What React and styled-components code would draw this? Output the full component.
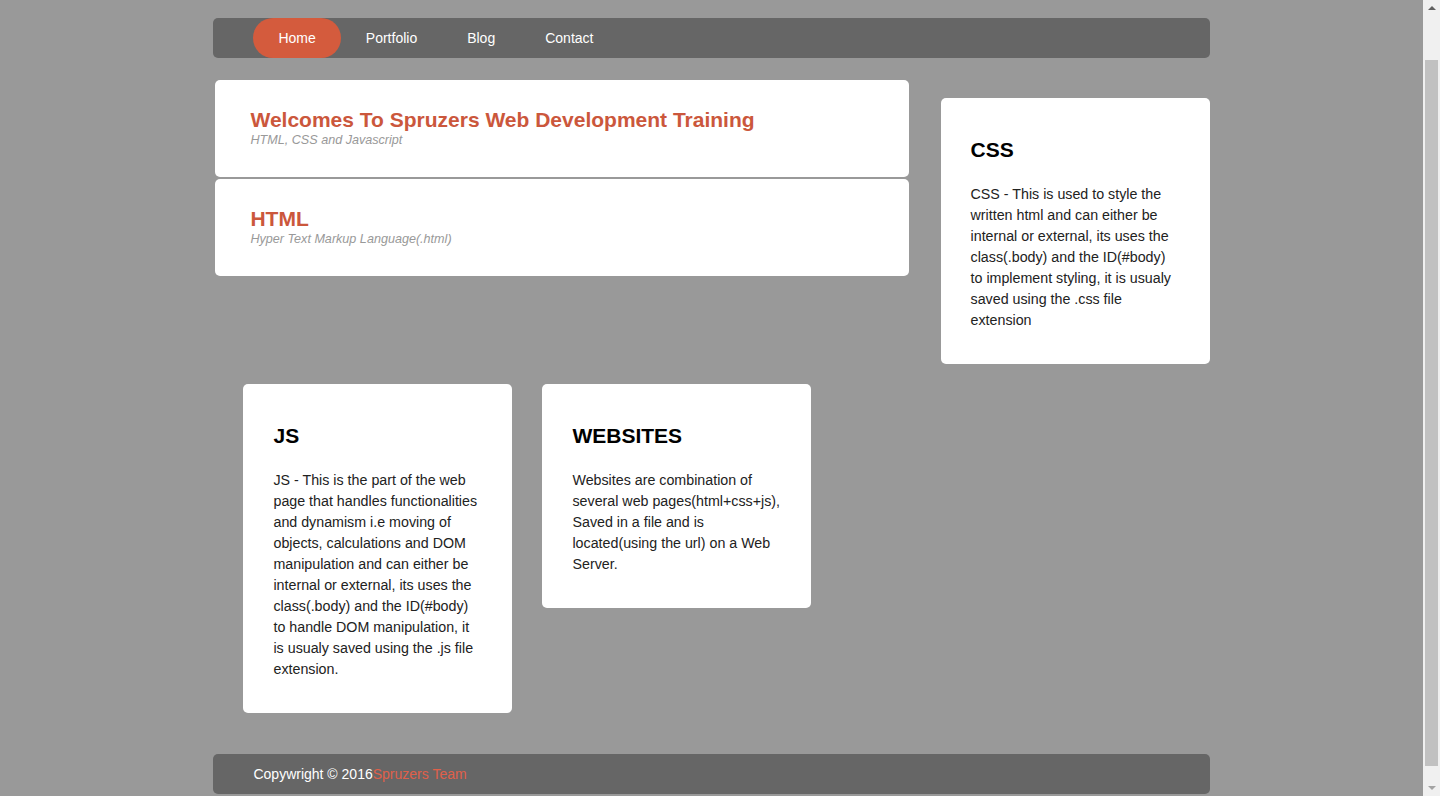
import React from "react";
import styled, { createGlobalStyle } from "styled-components";

const accent = "#d45b3d";

const GlobalStyle = createGlobalStyle`
  body {
    margin: 0;
    padding-right: 17px;
    background-color: #999999;
    font-family: "Liberation Sans", Arial, sans-serif;
  }
`;

// stand-in for the browser's vertical scrollbar seen in the screenshot
const ScrollTrack = styled.div`
  position: fixed;
  top: 0;
  right: 0;
  width: 17px;
  height: 100vh;
  background-color: #f0f0f0;
  display: flex;
  flex-direction: column;
  align-items: center;
`;

const ScrollArrow = styled.div`
  width: 0;
  height: 0;
  border-left: 4px solid transparent;
  border-right: 4px solid transparent;
  ${({ down }) =>
    down
      ? "border-top: 4px solid #a3a3a3; margin-top: auto; margin-bottom: 6px;"
      : "border-bottom: 4px solid #606060; margin-top: 6px;"}
`;

const ScrollThumb = styled.div`
  width: 13px;
  height: 706px;
  margin-top: 50px;
  background-color: #c1c1c1;
`;

const Wrapper = styled.div`
  width: 70%;
  margin: 0 auto;
  padding: 18px 0 18px;
`;

const NavBar = styled.nav`
  height: 40px;
  background-color: #666666;
  border-radius: 5px;
  display: flex;
  align-items: stretch;
  padding-left: 40px;
`;

const NavItem = styled.a`
  display: flex;
  align-items: center;
  padding: 0 25px;
  font-size: 14px;
  color: #ffffff;
  text-decoration: none;
  border-radius: 20px;
  background-color: ${({ active }) => (active ? accent : "transparent")};
`;

const TopRow = styled.div`
  display: flex;
  align-items: flex-start;
`;

const LeftColumn = styled.div`
  width: 694px;
  margin: 22px 0 0 2px;
  display: flex;
  flex-direction: column;
  gap: 2px;
`;

const Banner = styled.div`
  background-color: #ffffff;
  border-radius: 5px;
  padding: 28px 35px 29px;
`;

const BannerTitle = styled.h1`
  margin: 0;
  font-size: 21px;
  line-height: 23px;
  font-weight: bold;
  color: #cb573c;
`;

const BannerSub = styled.p`
  margin: 2px 0 0;
  font-size: 12.6px;
  line-height: 15px;
  font-style: italic;
  color: #999999;
`;

const Card = styled.div`
  width: 269px;
  box-sizing: border-box;
  background-color: #ffffff;
  border-radius: 5px;
  padding: 20px 30px 19px;
  margin-top: ${({ top }) => top || 0}px;
  margin-left: ${({ push }) => (push ? "auto" : "0")};
  flex-shrink: 0;
`;

const CardTitle = styled.h2`
  margin: 20px 0 23px;
  font-size: 21px;
  line-height: 23px;
  font-weight: bold;
  color: #000000;
`;

const CardText = styled.p`
  margin: 0 0 14px;
  font-size: 14.25px;
  line-height: 21px;
  color: #222222;
`;

const CardRow = styled.div`
  display: flex;
  align-items: flex-start;
  gap: 30px;
  padding-left: 30px;
  margin-top: 20px;
`;

const Footer = styled.footer`
  height: 40px;
  margin-top: 41px;
  background-color: #666666;
  border-radius: 5px;
  display: flex;
  align-items: center;
  padding-left: 40px;
  font-size: 14px;
  color: #ffffff;
`;

const Team = styled.span`
  color: #e0604a;
`;

const links = ["Home", "Portfolio", "Blog", "Contact"];

const cards = [
  {
    title: "JS",
    text: "JS - This is the part of the web page that handles functionalities and dynamism i.e moving of objects, calculations and DOM manipulation and can either be internal or external, its uses the class(.body) and the ID(#body) to handle DOM manipulation, it is usualy saved using the .js file extension.",
  },
  {
    title: "WEBSITES",
    text: "Websites are combination of several web pages(html+css+js), Saved in a file and is located(using the url) on a Web Server.",
  },
];

const App = () => {
  return (
    <>
      <GlobalStyle />
      <Wrapper>
        <NavBar>
          {links.map((l, i) => (
            <NavItem key={l} href="#" active={i === 0 ? 1 : 0}>
              {l}
            </NavItem>
          ))}
        </NavBar>

        <TopRow>
          <LeftColumn>
            <Banner>
              <BannerTitle>Welcomes To Spruzers Web Development Training</BannerTitle>
              <BannerSub>HTML, CSS and Javascript</BannerSub>
            </Banner>
            <Banner>
              <BannerTitle>HTML</BannerTitle>
              <BannerSub>Hyper Text Markup Language(.html)</BannerSub>
            </Banner>
          </LeftColumn>
          <Card top={40} push>
            <CardTitle>CSS</CardTitle>
            <CardText>
              CSS - This is used to style the written html and can either be internal or
              external, its uses the class(.body) and the ID(#body) to implement styling, it
              is usualy saved using the .css file extension
            </CardText>
          </Card>
        </TopRow>

        <CardRow>
          {cards.map((c) => (
            <Card key={c.title}>
              <CardTitle>{c.title}</CardTitle>
              <CardText>{c.text}</CardText>
            </Card>
          ))}
        </CardRow>

        <Footer>
          Copywright © 2016<Team>Spruzers Team</Team>
        </Footer>
      </Wrapper>
      <ScrollTrack>
        <ScrollArrow />
        <ScrollThumb />
        <ScrollArrow down />
      </ScrollTrack>
    </>
  );
};

export default App;
